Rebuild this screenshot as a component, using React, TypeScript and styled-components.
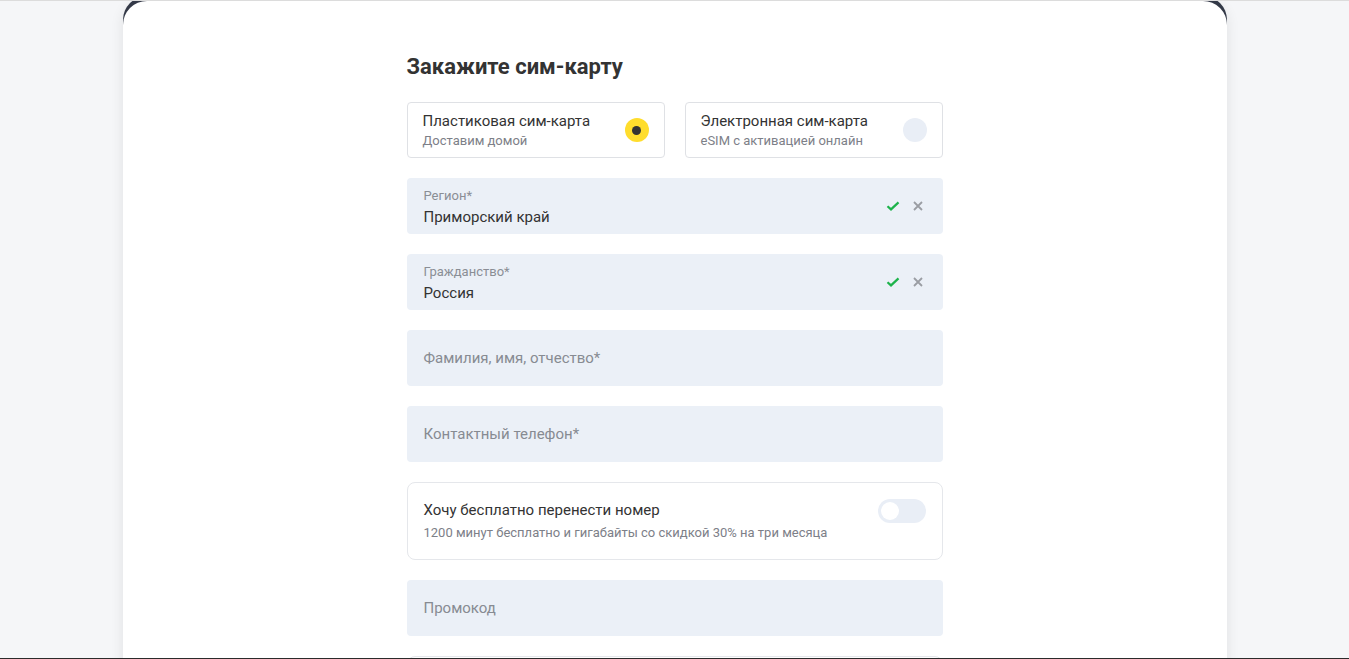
import { useState } from "react";
import styled, { createGlobalStyle } from "styled-components";

const GlobalStyle = createGlobalStyle`
  html, body {
    margin: 0;
    padding: 0;
    background: #f5f6f8;
    overflow: hidden;
  }
  body {
    font-family: Roboto, "Liberation Sans", Arial, sans-serif;
    color: #333;
  }
`;

const Page = styled.div`
  min-height: 100vh;
  position: relative;
  z-index: 0;
`;

const TopRule = styled.div`
  position: relative;
  z-index: 1;
  height: 1px;
  background: #dcdcdc;
`;

const Sheet = styled.div`
  position: relative;
  width: 1104px;
  margin: 0 auto;
  background: #fff;
  border-radius: 24px 24px 0 0;
  box-shadow: 0 0 14px rgba(0, 0, 0, 0.09);
  padding: 52px 0 40px;

  /* dark panel peeking from behind the rounded top corners */
  &::before {
    content: "";
    position: absolute;
    top: -5px;
    left: 0;
    right: 0;
    height: 60px;
    background: #353b4a;
    border-radius: 24px 24px 0 0;
    z-index: -1;
  }
`;

const Form = styled.div`
  width: 536px;
  margin: 0 auto;
  display: flex;
  flex-direction: column;
  gap: 20px;
`;

const Title = styled.h2`
  margin: 0 0 1px;
  font-size: 22px;
  line-height: 28px;
  font-weight: 700;
  color: #333;
`;

const Choice = styled.div`
  display: grid;
  grid-template-columns: 1fr 1fr;
  gap: 20px;
`;

const Option = styled.label`
  box-sizing: border-box;
  height: 56px;
  border: 1px solid #dfe1e5;
  border-radius: 4px;
  padding: 0 15px;
  display: flex;
  align-items: center;
  justify-content: space-between;
  cursor: pointer;
`;

const OptionText = styled.div`
  display: flex;
  flex-direction: column;
  gap: 1px;
`;

const OptionTitle = styled.span`
  font-size: 15px;
  line-height: 20px;
  color: #333;
`;

const OptionHint = styled.span`
  font-size: 13px;
  line-height: 18px;
  color: #7d8088;
`;

const Radio = styled.span<{ $on: boolean }>`
  width: 24px;
  height: 24px;
  border-radius: 50%;
  flex: none;
  background: ${(p) => (p.$on ? "#ffdd2d" : "#e9eef6")};
  display: flex;
  align-items: center;
  justify-content: center;

  &::after {
    content: "";
    width: 9px;
    height: 9px;
    border-radius: 50%;
    background: ${(p) => (p.$on ? "#333" : "transparent")};
  }
`;

const Field = styled.div`
  box-sizing: border-box;
  height: 56px;
  background: #ebf0f7;
  border-radius: 4px;
  padding: 0 17px;
  display: flex;
  align-items: center;
  justify-content: space-between;
`;

const FieldBody = styled.div`
  display: flex;
  flex-direction: column;
  gap: 3px;
  margin-top: 3px;
`;

const FieldLabel = styled.span`
  font-size: 13px;
  line-height: 16px;
  color: #8a8e95;
`;

const FieldValue = styled.span`
  font-size: 15px;
  line-height: 20px;
  color: #333;
`;

const Placeholder = styled.span`
  font-size: 15px;
  line-height: 20px;
  color: #878b92;
`;

const Actions = styled.div`
  display: flex;
  align-items: center;
  gap: 11px;
  margin-right: 1px;
`;

const IconButton = styled.span`
  width: 14px;
  height: 14px;
  display: flex;
  align-items: center;
  justify-content: center;
`;

const SwitchCard = styled.div`
  box-sizing: border-box;
  height: 78px;
  border: 1px solid #e5e7eb;
  border-radius: 8px;
  padding: 0 16px;
  display: flex;
  align-items: center;
  justify-content: space-between;
`;

const SwitchText = styled.div`
  display: flex;
  flex-direction: column;
  gap: 4px;
  margin-top: -1px;
`;

const SwitchTitle = styled.span`
  font-size: 15px;
  line-height: 20px;
  color: #333;
`;

const SwitchHint = styled.span`
  font-size: 13px;
  line-height: 17px;
  color: #7d8088;
`;

const Toggle = styled.button<{ $on: boolean }>`
  width: 48px;
  height: 24px;
  border: 0;
  padding: 3px;
  border-radius: 12px;
  background: ${(p) => (p.$on ? "#ffdd2d" : "#e9eef6")};
  display: flex;
  justify-content: ${(p) => (p.$on ? "flex-end" : "flex-start")};
  align-self: flex-start;
  margin-top: 16px;
  cursor: pointer;

  &::after {
    content: "";
    width: 18px;
    height: 18px;
    border-radius: 50%;
    background: #fff;
  }
`;

const Block = styled.div`
  box-sizing: border-box;
  height: 120px;
  border: 1px solid #e5e7eb;
  border-radius: 8px;
`;

const BottomEdge = styled.div`
  position: fixed;
  left: 0;
  right: 0;
  bottom: 0;
  height: 1px;
  background: #2b2b2b;
`;

function CheckIcon() {
  return (
    <svg width="14" height="10" viewBox="0 0 14 10">
      <path d="M1.5 5.2 L5 8.4 L12.5 1.4" fill="none" stroke="#1db34b" strokeWidth="2.2" />
    </svg>
  );
}

function ClearIcon() {
  return (
    <svg width="10" height="10" viewBox="0 0 10 10">
      <path d="M1 1 L9 9 M9 1 L1 9" stroke="#9a9da3" strokeWidth="1.8" />
    </svg>
  );
}

function FilledField({ label, value }: { label: string; value: string }) {
  return (
    <Field>
      <FieldBody>
        <FieldLabel>{label}</FieldLabel>
        <FieldValue>{value}</FieldValue>
      </FieldBody>
      <Actions>
        <IconButton>
          <CheckIcon />
        </IconButton>
        <IconButton>
          <ClearIcon />
        </IconButton>
      </Actions>
    </Field>
  );
}

export default function App() {
  const [kind, setKind] = useState<"plastic" | "esim">("plastic");
  const [transfer, setTransfer] = useState(false);

  return (
    <Page>
      <GlobalStyle />
      <TopRule />
      <Sheet>
        <Form>
          <Title>Закажите сим-карту</Title>
          <Choice>
            <Option onClick={() => setKind("plastic")}>
              <OptionText>
                <OptionTitle>Пластиковая сим-карта</OptionTitle>
                <OptionHint>Доставим домой</OptionHint>
              </OptionText>
              <Radio $on={kind === "plastic"} />
            </Option>
            <Option onClick={() => setKind("esim")}>
              <OptionText>
                <OptionTitle>Электронная сим-карта</OptionTitle>
                <OptionHint>eSIM с активацией онлайн</OptionHint>
              </OptionText>
              <Radio $on={kind === "esim"} />
            </Option>
          </Choice>
          <FilledField label="Регион*" value="Приморский край" />
          <FilledField label="Гражданство*" value="Россия" />
          <Field>
            <Placeholder>Фамилия, имя, отчество*</Placeholder>
          </Field>
          <Field>
            <Placeholder>Контактный телефон*</Placeholder>
          </Field>
          <SwitchCard>
            <SwitchText>
              <SwitchTitle>Хочу бесплатно перенести номер</SwitchTitle>
              <SwitchHint>1200 минут бесплатно и гигабайты со скидкой 30% на три месяца</SwitchHint>
            </SwitchText>
            <Toggle $on={transfer} onClick={() => setTransfer(!transfer)} />
          </SwitchCard>
          <Field>
            <Placeholder>Промокод</Placeholder>
          </Field>
          <Block />
        </Form>
      </Sheet>
      <BottomEdge />
    </Page>
  );
}
